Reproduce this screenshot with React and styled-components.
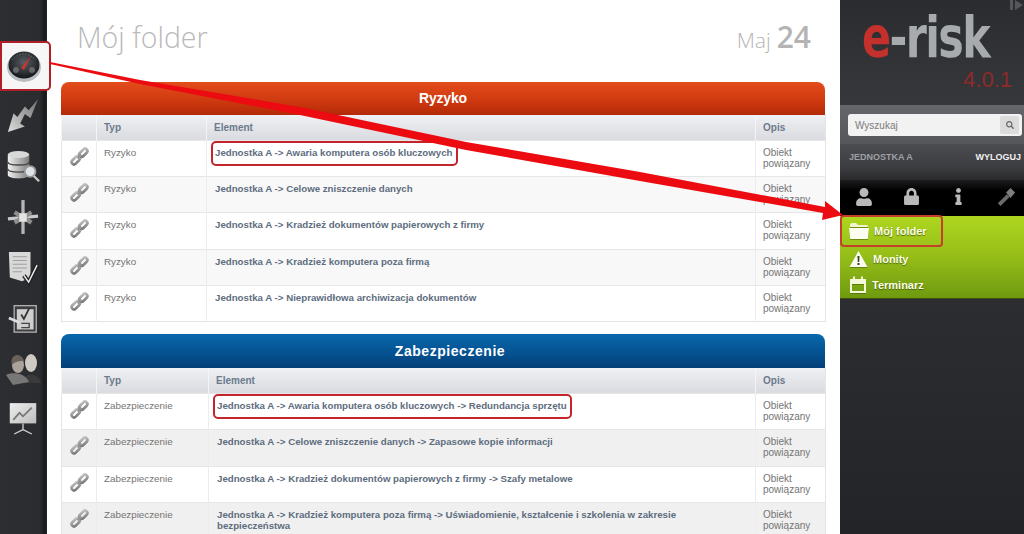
import React from 'react'
import styled, { createGlobalStyle } from 'styled-components'
import { FaUser, FaLock, FaInfo, FaSearch } from 'react-icons/fa'

const GlobalStyle = createGlobalStyle`
  html, body { margin: 0; padding: 0; height: 100%; overflow: hidden; background: #fff; }
  body { font-family: "Liberation Sans", Arial, sans-serif; }
  *, *::before, *::after { box-sizing: border-box; }
`

const Page = styled.div`
  position: relative;
  display: flex;
  width: 1024px;
  height: 534px;
  overflow: hidden;
`

/* left icon rail */
const Rail = styled.nav`
  width: 47px;
  flex: none;
  display: flex;
  flex-direction: column;
  padding-top: 41px;
  background: linear-gradient(90deg, #2d2e32 0, #2b2c30 40px, #17181a 45px, #26272a 47px);
`
const RailItem = styled.div`
  position: relative;
  height: ${p => (p.$active ? 50 : 50.5)}px;
  width: ${p => (p.$active ? 51 : 47)}px;
  flex: none;
  z-index: 2;
  display: flex;
  align-items: center;
  justify-content: center;
  padding-right: ${p => (p.$active ? 4 : 2)}px;
  background: ${p => (p.$active ? '#f6f6f6' : 'transparent')};
  border: ${p => (p.$active ? '2px solid #b01f27' : 'none')};
  border-radius: ${p => (p.$active ? '0 5px 5px 0' : '0')};
`

/* centre column */
const Main = styled.main`
  width: 793px;
  flex: none;
  padding: 0 15px 0 14px;
  background: #fff;
`
const TitleRow = styled.header`
  height: 82px;
  display: flex;
  justify-content: space-between;
  padding: 19px 14px 0 16px;
`
const Title = styled.h1`
  margin: 0;
  font: 300 28.5px/36px "Open Sans", sans-serif;
  color: #b9b9b9;
`
const DateBox = styled.div`
  font: 300 21px/36px "Open Sans", sans-serif;
  color: #b5b5b5;
  b {
    font-weight: 600;
    font-size: 30px;
    margin-left: 6px;
    color: #b4b4b4;
  }
`
const Panel = styled.section`
  margin-bottom: 12px;
`
const PanelHead = styled.div`
  height: ${p => p.$h}px;
  border-radius: 8px 8px 0 0;
  background: ${p => p.$bg};
  color: #fff;
  font-weight: 700;
  font-size: 14px;
  letter-spacing: ${p => p.$spacing}px;
  line-height: ${p => p.$h}px;
  padding-left: ${p => p.$pad}px;
  text-align: center;
`
const Table = styled.table`
  width: 764px;
  table-layout: fixed;
  border-collapse: collapse;
  font-size: 10px;
  border-left: 1px solid #e4e4e4;
  border-right: 1px solid #e4e4e4;
  border-bottom: 1px solid #e4e4e4;
`
const HeadCell = styled.th`
  height: 25px;
  padding: 0 7px;
  text-align: left;
  font-weight: 700;
  color: #6c7a8c;
  background: linear-gradient(#eef0f3, #d9dbe0);
  border-left: 1px solid #f4f4f6;
`
const Row = styled.tr`
  height: ${p => p.$h}px;
  background: ${p => (p.$alt ? p.$altBg : '#fff')};
  border-top: 1px solid #e6e6e6;
`
const Cell = styled.td`
  padding: 6px 7px 0;
  vertical-align: top;
  line-height: 11px;
  color: #747474;
  border-left: 1px solid #ececec;
`
const TypeCell = styled(Cell)`
  font-size: 9.8px;
`
const ElementCell = styled(Cell)`
  padding-left: 8px;
  font-size: 9.7px;
`
const IconCell = styled(Cell)`
  padding: 6px 0 0 8px;
  border-left: none;
`
const ElementLink = styled.span`
  position: relative;
  font-weight: 700;
  color: #5e6d7e;
  ${p =>
    p.$marked &&
    `&::after {
      content: '';
      position: absolute;
      inset: -6px -5px -8px -4px;
      border: 2px solid #c4252d;
      border-radius: 5px;
    }`}
`

/* right column */
const Side = styled.aside`
  width: 184px;
  flex: none;
  overflow: hidden;
  display: flex;
  flex-direction: column;
  background: linear-gradient(#2b2c30, #37383c 105px, #2c2d31 300px, #232427);
`
const Brand = styled.div`
  height: 105px;
  padding: 8px 0 0 22px;
  position: relative;
`
const Logo = styled.div`
  font: 700 53px/56px "DejaVu Sans", sans-serif;
  letter-spacing: -2px;
  color: #a8abad;
  transform: scale(0.81, 1.06);
  transform-origin: left top;
  white-space: nowrap;
  span { color: #c4302b; }
`
const Version = styled.div`
  position: absolute;
  right: 12px;
  top: 66px;
  font: 400 22px/28px "Liberation Sans", sans-serif;
  color: #8e2a2a;
`
const Collapse = styled.svg`
  position: absolute;
  right: 0;
  top: 0;
`
const SearchBand = styled.div`
  height: 39px;
  padding: 9px 2px 0 8px;
  background: linear-gradient(#64666a, #54565a);
`
const SearchBox = styled.div`
  height: 22px;
  display: flex;
  align-items: center;
  justify-content: space-between;
  padding: 0 3px 0 7px;
  background: #f2f2f2;
  border-radius: 3px;
  font-size: 10px;
  color: #7c7c7c;
`
const SearchBtn = styled.div`
  width: 19px;
  height: 18px;
  display: flex;
  align-items: center;
  justify-content: center;
  background: #dcdcdc;
  border-radius: 2px;
  color: #666;
`
const UserBand = styled.div`
  height: 36px;
  padding: 8px 3px 0 9px;
  display: flex;
  justify-content: space-between;
  align-items: flex-start;
  font-size: 9px;
  line-height: 11px;
  font-weight: 700;
  color: #9ea0a4;
  background: linear-gradient(#4c4d51, #3a3b3e 70%, #2a2a2c);
  b { color: #f2f2f2; }
`
const ToolBand = styled.div`
  height: 36px;
  display: grid;
  grid-template-columns: repeat(4, 47.5px);
  align-items: center;
  justify-items: center;
  background: linear-gradient(#1d1d1f, #000 30%, #000);
  color: #b9b9b9;
  padding-bottom: 3px;
`
const Menu = styled.ul`
  list-style: none;
  margin: 0;
  padding: 0;
  height: 82px;
  background: linear-gradient(#aed61f, #95bd18 50%, #6f9a10);
  box-shadow: 0 1px 0 #3f4d10;
`
const MenuItem = styled.li`
  position: relative;
  height: ${p => p.$h}px;
  display: flex;
  align-items: center;
  gap: 5px;
  padding-left: 9px;
  font-size: 11px;
  font-weight: 700;
  color: #fbfde8;
  text-shadow: 0 1px 1px rgba(50, 70, 0, 0.7);
  svg { flex: none; filter: drop-shadow(0 1px 0 rgba(60, 80, 0, 0.5)); }
  ${p =>
    p.$marked &&
    `&::after {
      content: '';
      position: absolute;
      left: 0;
      top: -1px;
      width: 103px;
      bottom: -2px;
      border: 2px solid #c4402a;
      border-radius: 4px;
    }`}
`
const ArrowLayer = styled.svg`
  position: absolute;
  left: 0;
  top: 0;
  z-index: 5;
  pointer-events: none;
`

const GaugeIcon = () => (
  <svg width="36" height="36" viewBox="0 0 36 36">
    <defs>
      <radialGradient id="g1" cx="50%" cy="40%" r="60%">
        <stop offset="0" stopColor="#5a5f64" />
        <stop offset="1" stopColor="#14161a" />
      </radialGradient>
    </defs>
    <ellipse cx="18" cy="19" rx="17" ry="15" fill="#b9bcbf" />
    <ellipse cx="18" cy="17" rx="15.5" ry="13.5" fill="url(#g1)" />
    <path d="M15 20 L25 8 L18 22 Z" fill="#c33" />
    <circle cx="10" cy="22" r="3" fill="#666" />
    <circle cx="26" cy="22" r="3" fill="#666" />
    <path d="M6 12 Q18 0 30 12" fill="none" stroke="#888" strokeWidth="1" strokeDasharray="1 2" />
  </svg>
)
const BoltIcon = () => (
  <svg width="34" height="36" viewBox="0 0 36 38">
    <defs>
      <linearGradient id="g2" x1="1" y1="0" x2="0" y2="1">
        <stop offset="0" stopColor="#6f6f6f" />
        <stop offset="1" stopColor="#dedede" />
      </linearGradient>
    </defs>
    <path d="M34 1 L26 21 L20 17 L15 27 L20 30 L2 36 L8 16 L12 20 L20 9 L24 13 Z" fill="url(#g2)" />
  </svg>
)
const DbIcon = () => (
  <svg width="34" height="34" viewBox="0 0 38 38">
    <defs>
      <linearGradient id="g3" x1="0" x2="1">
        <stop offset="0" stopColor="#f0f0f0" />
        <stop offset="1" stopColor="#7d7d7d" />
      </linearGradient>
    </defs>
    <path d="M2 5 V28 C2 33 26 33 26 28 V5 Z" fill="url(#g3)" />
    <ellipse cx="14" cy="5" rx="12" ry="4" fill="#d8d8d8" />
    <path d="M2 13 C2 18 26 18 26 13 M2 21 C2 26 26 26 26 21" fill="none" stroke="#444" strokeWidth="1.5" />
    <circle cx="27" cy="24" r="6" fill="#dfe3e6" stroke="#999" strokeWidth="2" />
    <path d="M31 29 L37 35" stroke="#ccc" strokeWidth="2.5" />
  </svg>
)
const PipesIcon = () => (
  <svg width="32" height="36" viewBox="0 0 34 36">
    <path d="M17 0 V36" stroke="#b5b5b5" strokeWidth="3.5" />
    <path d="M1 20 L33 17" stroke="#c8c8c8" strokeWidth="3.5" />
    <path d="M8 13 L26 24 M8 24 L26 13" stroke="#8e8e8e" strokeWidth="4.5" />
    <rect x="13" y="14" width="8" height="9" fill="#e4e4e4" />
  </svg>
)
const DocIcon = () => (
  <svg width="32" height="36" viewBox="0 0 34 36">
    <path d="M2 1 H25 V28 L16 32 L3 28 Z" fill="#d9d9d9" />
    <path d="M6 6 H21 M6 10 H21 M6 14 H21 M6 18 H21 M6 22 H16" stroke="#9a9a9a" strokeWidth="1" />
    <path d="M18 26 L23 33 L32 15" fill="none" stroke="#222" strokeWidth="4.5" />
    <path d="M18 26 L23 33 L32 15" fill="none" stroke="#ededed" strokeWidth="1.5" />
  </svg>
)
const ClipIcon = () => (
  <svg width="30" height="32" viewBox="0 0 34 34">
    <rect x="7" y="3" width="25" height="30" fill="#3d3d40" stroke="#b0b0b0" strokeWidth="1.5" />
    <rect x="10" y="7" width="19" height="23" fill="#cfcfcf" />
    <path d="M15 13 L18 18 L24 6" fill="none" stroke="#333" strokeWidth="2" />
    <path d="M15 23 H24 V28 H15" fill="none" stroke="#444" strokeWidth="1.5" />
    <path d="M1 17 L13 22" stroke="#ddd" strokeWidth="3" />
  </svg>
)
const PeopleIcon = () => (
  <svg width="36" height="34" viewBox="0 0 36 34">
    <ellipse cx="26" cy="11" rx="6" ry="9" fill="#cfcac4" />
    <path d="M17 31 C18 20 34 20 36 31 Z" fill="#3a3a3c" />
    <ellipse cx="13" cy="13" rx="6" ry="8" fill="#a9a39c" />
    <path d="M12 3 C6 4 6 10 7 13 C10 9 15 9 19 9 C18 5 15 3 12 3 Z" fill="#6a6259" />
    <path d="M1 23 C6 20 20 20 24 30 L8 33 Z" fill="#777" />
  </svg>
)
const ChartIcon = () => (
  <svg width="30" height="38" viewBox="0 0 34 38">
    <defs>
      <linearGradient id="g4" x1="0" y1="0" x2="1" y2="1">
        <stop offset="0" stopColor="#eeeeee" />
        <stop offset="1" stopColor="#bdbdbd" />
      </linearGradient>
    </defs>
    <rect x="2" y="1" width="30" height="23" fill="url(#g4)" />
    <path d="M6 20 L13 12 L17 16 L27 6" fill="none" stroke="#777" strokeWidth="2" />
    <path d="M17 24 V31 M17 31 L7 36 M17 31 L27 36" stroke="#cfcfcf" strokeWidth="1.5" />
  </svg>
)
const ChainIcon = () => (
  <svg width="19" height="19" viewBox="0 0 20 20">
    <defs>
      <linearGradient id="ch" x1="0" y1="1" x2="1" y2="0">
        <stop offset="0" stopColor="#777" />
        <stop offset="1" stopColor="#c4c4c4" />
      </linearGradient>
    </defs>
    <g fill="none" stroke="url(#ch)" strokeWidth="2.8">
      <rect x="-5" y="-2.5" width="10" height="5" rx="2.5" transform="translate(6 14) rotate(-45)" />
      <rect x="-5" y="-2.5" width="10" height="5" rx="2.5" transform="translate(14 6) rotate(-45)" />
    </g>
    <path d="M8 12 L12 8" stroke="#969696" strokeWidth="2.6" />
  </svg>
)
const TorchIcon = () => (
  <svg width="20" height="20" viewBox="0 0 22 22">
    <path d="M2 18 L12 8 L15 11 L5 21 Z" fill="#6b6b6b" />
    <path d="M11 6 L16 1 L21 6 L16 12 Z" fill="#7d7d7d" />
  </svg>
)
const FolderIcon = () => (
  <svg width="20" height="18" viewBox="0 0 20 18">
    <path d="M1 3 C1 2 2 1 3 1 H7 L9 3 H18 C19 3 19 4 19 5 H1 Z" fill="#f0f5cf" />
    <path d="M0 6 H20 L19 16 C19 17 18 17 17 17 H3 C2 17 1 17 1 16 Z" fill="#fbfdf0" />
  </svg>
)
const WarnIcon = () => (
  <svg width="19" height="18" viewBox="0 0 19 18">
    <path d="M9.5 1 L18.5 17 H0.5 Z" fill="#fbfdf0" />
    <path d="M8.5 6 H10.5 L10.2 12 H8.8 Z M8.5 13 H10.5 V15 H8.5 Z" fill="#3a3f1c" />
  </svg>
)
const CalendarIcon = () => (
  <svg width="18" height="18" viewBox="0 0 18 18">
    <path d="M1 3 H17 V17 H1 Z M3 8 V15 H15 V8 Z" fill="#f4f8d8" fillRule="evenodd" />
    <path d="M4 0.5 H6 V4 H4 Z M12 0.5 H14 V4 H12 Z" fill="#f4f8d8" />
  </svg>
)

const railIcons = [GaugeIcon, BoltIcon, DbIcon, PipesIcon, DocIcon, ClipIcon, PeopleIcon, ChartIcon]

const riskRows = [
  { el: 'Jednostka A -> Awaria komputera osób kluczowych', marked: true },
  { el: 'Jednostka A -> Celowe zniszczenie danych' },
  { el: 'Jednostka A -> Kradzież dokumentów papierowych z firmy' },
  { el: 'Jednostka A -> Kradzież komputera poza firmą' },
  { el: 'Jednostka A -> Nieprawidłowa archiwizacja dokumentów' },
]
const secRows = [
  { el: 'Jednostka A -> Awaria komputera osób kluczowych -> Redundancja sprzętu', marked: true },
  { el: 'Jednostka A -> Celowe zniszczenie danych -> Zapasowe kopie informacji' },
  { el: 'Jednostka A -> Kradzież dokumentów papierowych z firmy -> Szafy metalowe' },
  { el: 'Jednostka A -> Kradzież komputera poza firmą -> Uświadomienie, kształcenie i szkolenia w zakresie bezpieczeństwa' },
]

const DataPanel = ({ title, bg, headH, spacing, pad, typ, rows, cols, altBg }) => (
  <Panel>
    <PanelHead $bg={bg} $h={headH} $spacing={spacing} $pad={pad}>{title}</PanelHead>
    <Table>
      <colgroup>
        {cols.map((w, i) => <col key={i} width={w} />)}
      </colgroup>
      <thead>
        <tr>
          <HeadCell />
          <HeadCell>Typ</HeadCell>
          <HeadCell>Element</HeadCell>
          <HeadCell>Opis</HeadCell>
        </tr>
      </thead>
      <tbody>
        {rows.map((r, i) => (
          <Row key={i} $h={36.4} $alt={i % 2 === 1} $altBg={altBg}>
            <IconCell><ChainIcon /></IconCell>
            <TypeCell>{typ}</TypeCell>
            <ElementCell><ElementLink $marked={r.marked}>{r.el}</ElementLink></ElementCell>
            <Cell>Obiekt<br />powiązany</Cell>
          </Row>
        ))}
      </tbody>
    </Table>
  </Panel>
)

export default function App() {
  return (
    <Page>
      <GlobalStyle />
      <Rail>
        {railIcons.map((Icon, i) => (
          <RailItem key={i} $active={i === 0}><Icon /></RailItem>
        ))}
      </Rail>
      <Main>
        <TitleRow>
          <Title>Mój folder</Title>
          <DateBox>Maj<b>24</b></DateBox>
        </TitleRow>
        <DataPanel
          title="Ryzyko"
          bg="linear-gradient(#e34c1b, #cf3a10 55%, #b32a08)"
          headH={33}
          spacing={-0.2}
          pad={0}
          typ="Ryzyko"
          rows={riskRows}
          cols={[35, 110, 549, 70]}
          altBg="#f8f8f8"
        />
        <DataPanel
          title="Zabezpieczenie"
          bg="linear-gradient(#0868ac, #05508f 60%, #033f78)"
          headH={34}
          spacing={0.55}
          pad={14}
          typ="Zabezpieczenie"
          rows={secRows}
          cols={[35, 112, 547, 70]}
          altBg="#f0f0f0"
        />
      </Main>
      <Side>
        <Brand>
          <Collapse width="14" height="10" viewBox="0 0 14 10">
            <rect x="0" y="0" width="3" height="10" fill="#55575b" />
            <path d="M5 0 L13 5 L5 10 Z" fill="#55575b" />
          </Collapse>
          <Logo><span>e</span>-risk</Logo>
          <Version>4.0.1</Version>
        </Brand>
        <SearchBand>
          <SearchBox>
            Wyszukaj
            <SearchBtn><FaSearch size={8} /></SearchBtn>
          </SearchBox>
        </SearchBand>
        <UserBand>JEDNOSTKA A<b>WYLOGUJ</b></UserBand>
        <ToolBand>
          <FaUser size={18} />
          <FaLock size={17} />
          <FaInfo size={17} />
          <TorchIcon />
        </ToolBand>
        <Menu>
          <MenuItem $marked $h={29}><FolderIcon />Mój folder</MenuItem>
          <MenuItem $h={27}><WarnIcon />Monity</MenuItem>
          <MenuItem $h={26}><CalendarIcon />Terminarz</MenuItem>
        </Menu>
      </Side>
      <ArrowLayer width="1024" height="534" viewBox="0 0 1024 534">
        <path
          d="M50 62 L140 80 L300 107 L466 142 L640 172 L825 207 L825 201 L843 215 L822 220 L823 213 L640 181 L466 150 L300 115 L140 84 L50 64 Z"
          fill="#ec0b10"
        />
      </ArrowLayer>
    </Page>
  )
}
